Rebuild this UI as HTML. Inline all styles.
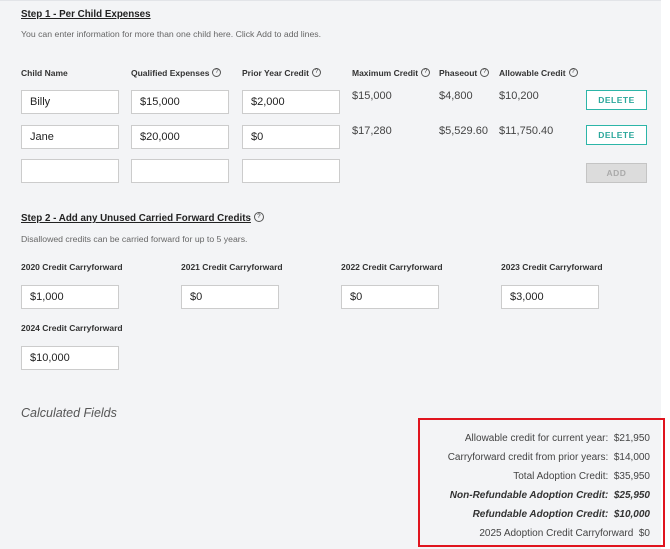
<!DOCTYPE html>
<html><head><style>
body{margin:0;width:670px;height:548px;background:#fff;font-family:"Liberation Sans",Arial,sans-serif;color:#333;position:relative;overflow:hidden}
#bg{position:absolute;left:0;top:0;width:661px;height:548px;background:#f3f4f6;border-top:1px solid #e2e4e8}
.a{position:absolute;white-space:nowrap}
.h{font-size:9.8px;font-weight:bold;text-decoration:underline;color:#222}
.s{font-size:8.7px;color:#666}
.l{font-size:8.5px;font-weight:bold;color:#333}
.i{position:absolute;background:#fff;border:1px solid #ccc;box-sizing:border-box;height:24px;font-size:11px;line-height:22px;padding-left:8px;color:#222}
.v{font-size:11px;color:#444}
.q{display:inline-block;width:7px;height:7px;border:1px solid #555;border-radius:50%;font-size:6px;line-height:7px;text-align:center;font-weight:normal;vertical-align:middle;margin-left:3px;margin-top:-2px}
.b{position:absolute;box-sizing:border-box;width:61px;height:20px;border:1px solid #2cb5a8;background:#fff;color:#2aa79b;font-size:8.5px;font-weight:bold;text-align:center;line-height:18px;letter-spacing:.5px}
.r{position:absolute;right:0;font-size:10px;color:#444;text-align:right;white-space:nowrap}
</style></head><body>
<div id="bg"></div>
<div class="a h" style="left:21px;top:9px">Step 1 - Per Child Expenses</div>
<div class="a s" style="left:21px;top:29px">You can enter information for more than one child here. Click Add to add lines.</div>
<div class="a l" style="left:21px;top:68px">Child Name</div>
<div class="a l" style="left:131px;top:68px">Qualified Expenses<span class="q">?</span></div>
<div class="a l" style="left:242px;top:68px">Prior Year Credit<span class="q">?</span></div>
<div class="a l" style="left:352px;top:68px">Maximum Credit<span class="q">?</span></div>
<div class="a l" style="left:439px;top:68px">Phaseout<span class="q">?</span></div>
<div class="a l" style="left:499px;top:68px">Allowable Credit<span class="q">?</span></div>
<div class="i" style="left:21px;top:90px;width:98px">Billy</div>
<div class="i" style="left:131px;top:90px;width:98px">$15,000</div>
<div class="i" style="left:242px;top:90px;width:98px">$2,000</div>
<div class="i" style="left:21px;top:125px;width:98px">Jane</div>
<div class="i" style="left:131px;top:125px;width:98px">$20,000</div>
<div class="i" style="left:242px;top:125px;width:98px">$0</div>
<div class="i" style="left:21px;top:159px;width:98px"></div>
<div class="i" style="left:131px;top:159px;width:98px"></div>
<div class="i" style="left:242px;top:159px;width:98px"></div>
<div class="a v" style="left:352px;top:90px">$15,000</div>
<div class="a v" style="left:439px;top:90px">$4,800</div>
<div class="a v" style="left:499px;top:90px">$10,200</div>
<div class="a v" style="left:352px;top:125px">$17,280</div>
<div class="a v" style="left:439px;top:125px">$5,529.60</div>
<div class="a v" style="left:499px;top:125px">$11,750.40</div>
<div class="b" style="left:586px;top:90px">DELETE</div>
<div class="b" style="left:586px;top:125px">DELETE</div>
<div class="b" style="left:586px;top:163px;background:#dcdcdc;border-color:#c4c4c4;color:#aaa">ADD</div>
<div class="a h" style="left:21px;top:213px">Step 2 - Add any Unused Carried Forward Credits<span class="q" style="width:8px;height:8px;line-height:8px">?</span></div>
<div class="a s" style="left:21px;top:234px">Disallowed credits can be carried forward for up to 5 years.</div>
<div class="a l" style="left:21px;top:262px">2020 Credit Carryforward</div>
<div class="a l" style="left:181px;top:262px">2021 Credit Carryforward</div>
<div class="a l" style="left:341px;top:262px">2022 Credit Carryforward</div>
<div class="a l" style="left:501px;top:262px">2023 Credit Carryforward</div>
<div class="i" style="left:21px;top:285px;width:98px">$1,000</div>
<div class="i" style="left:181px;top:285px;width:98px">$0</div>
<div class="i" style="left:341px;top:285px;width:98px">$0</div>
<div class="i" style="left:501px;top:285px;width:98px">$3,000</div>
<div class="a l" style="left:21px;top:323px">2024 Credit Carryforward</div>
<div class="i" style="left:21px;top:346px;width:98px">$10,000</div>
<div class="a" style="left:21px;top:406px;font-size:12.5px;font-style:italic;color:#555">Calculated Fields</div>
<div style="position:absolute;left:418px;top:418px;width:247px;height:129px;box-sizing:border-box;border:2px solid #e0141e">
 <div style="position:absolute;left:0;right:13px;top:0;bottom:0">
  <div class="r" style="top:13px">Allowable credit for current year:&nbsp; $21,950</div>
  <div class="r" style="top:32px">Carryforward credit from prior years:&nbsp; $14,000</div>
  <div class="r" style="top:51px">Total Adoption Credit:&nbsp; $35,950</div>
  <div class="r" style="top:70px;font-weight:bold;font-style:italic;color:#333">Non-Refundable Adoption Credit:&nbsp; $25,950</div>
  <div class="r" style="top:89px;font-weight:bold;font-style:italic;color:#333">Refundable Adoption Credit:&nbsp; $10,000</div>
  <div class="r" style="top:108px">2025 Adoption Credit Carryforward&nbsp; $0</div>
 </div>
</div>
</body></html>
